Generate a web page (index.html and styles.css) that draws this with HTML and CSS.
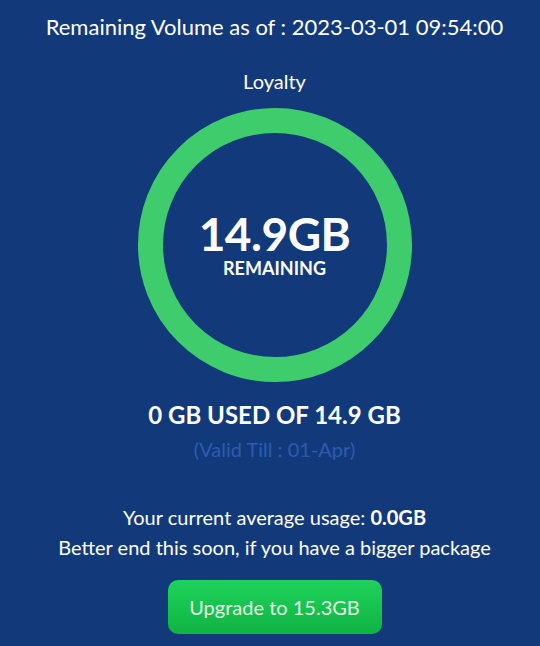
FILE: index.html
```html
<!DOCTYPE html>
<html lang="en">
<head>
  <meta charset="UTF-8" />
  <meta name="viewport" content="width=device-width, initial-scale=1.0" />
  <title>Remaining Volume</title>
  <link rel="stylesheet" href="styles.css">
</head>
<body>
  <div class="usage">
    <h1 class="usage-title">Remaining Volume as of : 2023-03-01 09:54:00</h1>
    <div class="plan-name">Loyalty</div>

    <div class="gauge">
      <svg class="gauge-ring" width="274" height="274" viewBox="0 0 274 274">
        <circle cx="137" cy="137" r="124.5" fill="none" stroke="#3ecc6c" stroke-width="25" />
      </svg>
      <div class="gauge-label">
        <div class="gauge-amount">14.9GB</div>
        <div class="gauge-caption">REMAINING</div>
      </div>
    </div>

    <div class="used">0 GB USED OF 14.9 GB</div>
    <div class="valid">(Valid Till : 01-Apr)</div>

    <div class="advice">
      <p>Your current average usage: <b>0.0GB</b></p>
      <p>Better end this soon, if you have a bigger package</p>
    </div>

    <button class="btn-upgrade">Upgrade to 15.3GB</button>
  </div>
</body>
</html>
```

FILE: styles.css
```css
body {
  margin: 0;
  background-color: #123a7b;
  color: white;
  font-family: Lato, "Open Sans", sans-serif;
  text-align: center;
}

.usage {
  display: flex;
  flex-direction: column;
  align-items: center;
  padding: 12px 0 0 9px;
}

.usage-title {
  margin: 0;
  font-size: 22px;
  font-weight: normal;
  line-height: 30px;
  white-space: nowrap;
}

.plan-name {
  margin-top: 27px;
  font-size: 20px;
  line-height: 24px;
}

.gauge {
  position: relative;
  width: 274px;
  height: 274px;
  margin-top: 15px;
}

.gauge-ring {
  display: block;
}

.gauge-label {
  position: absolute;
  inset: 0;
  display: flex;
  flex-direction: column;
  align-items: center;
  justify-content: center;
}

.gauge-amount {
  font-size: 46px;
  font-weight: bold;
  line-height: 46px;
  letter-spacing: -0.5px;
}

.gauge-caption {
  font-size: 18px;
  font-weight: bold;
  line-height: 22px;
}

.used {
  margin-top: 18px;
  font-size: 24px;
  font-weight: bold;
  line-height: 30px;
}

.valid {
  margin-top: 6px;
  font-size: 20px;
  line-height: 26px;
  color: #2b5caf;
}

.advice {
  margin-top: 40px;
}

.advice p {
  margin: 0;
  font-size: 20px;
  line-height: 30px;
  white-space: nowrap;
}

.btn-upgrade {
  margin-top: 18px;
  width: 214px;
  height: 54px;
  border: none;
  border-radius: 10px;
  background: linear-gradient(#1ed25a, #10b444);
  color: #e4f8e4;
  font-family: inherit;
  font-size: 20px;
  cursor: pointer;
}
```
